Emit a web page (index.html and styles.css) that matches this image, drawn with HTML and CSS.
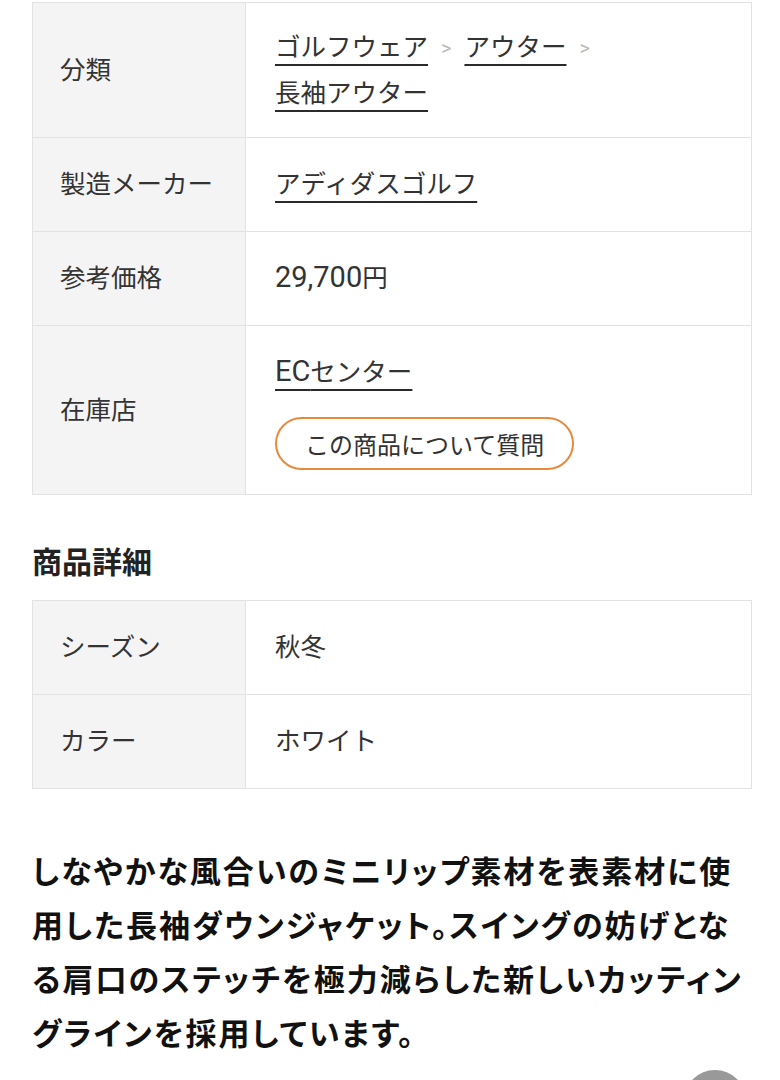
FILE: index.html
```html
<!DOCTYPE html>
<html lang="ja">
<head>
<meta charset="utf-8">
<title>商品情報</title>
<link rel="stylesheet" href="styles.css">
</head>
<body>
<main class="page">
  <table class="spec">
    <tr>
      <th>分類</th>
      <td class="crumbs">
        <a href="#">ゴルフウェア</a><span class="sep">&gt;</span><a href="#">アウター</a><span class="sep">&gt;</span><br><a href="#">長袖アウター</a>
      </td>
    </tr>
    <tr>
      <th>製造メーカー</th>
      <td><a href="#">アディダスゴルフ</a></td>
    </tr>
    <tr>
      <th>参考価格</th>
      <td><span class="latin">29,700</span>円</td>
    </tr>
    <tr>
      <th>在庫店</th>
      <td class="shop">
        <a href="#"><span class="latin">EC</span>センター</a>
        <div class="ask"><button type="button" class="ask-btn">この商品について質問</button></div>
      </td>
    </tr>
  </table>

  <h2 class="heading">商品詳細</h2>

  <table class="spec">
    <tr>
      <th>シーズン</th>
      <td>秋冬</td>
    </tr>
    <tr>
      <th>カラー</th>
      <td>ホワイト</td>
    </tr>
  </table>

  <p class="desc">しなやかな風合いのミニリップ素材を表素材に使用した長袖ダウンジャケット。スイングの妨げとなる肩口のステッチを極力減らした新しいカッティングラインを採用しています。</p>
</main>
<div class="pagetop"></div>
</body>
</html>
```

FILE: styles.css
```css
html, body {
  margin: 0;
  padding: 0;
  background: #fff;
}
body {
  font-family: Roboto, "Noto Sans CJK JP", sans-serif;
  color: #333;
}
.page {
  padding: 2px 28px 0 32px;
}
.spec {
  width: 720px;
  border-collapse: collapse;
  font-size: 25.5px;
  line-height: 45px;
}
.spec th,
.spec td {
  border: 1px solid #e2e2e2;
  padding: 24px 0 24px 28px;
  text-align: left;
  vertical-align: middle;
}
.spec th {
  width: 185px;
  background: #f4f4f4;
  font-weight: normal;
  padding-left: 27px;
}
.spec td {
  padding-left: 29px;
}
.spec td.crumbs {
  padding-top: 22px;
  padding-bottom: 21px;
}
.latin {
  font-size: 29px;
  line-height: 1;
}
.spec a {
  color: #333;
  text-decoration: underline;
  text-decoration-color: #2a2a2a;
  text-decoration-thickness: 2px;
  text-underline-offset: 8px;
}
.sep {
  color: #bbb;
  font-size: 20px;
  margin: 0 13px;
  vertical-align: 1px;
}
.ask {
  margin-top: 22px;
  line-height: 1;
}
.ask-btn {
  font-family: inherit;
  font-size: 24px;
  color: #333;
  background: #fff;
  border: 2px solid #e8893c;
  border-radius: 27px;
  height: 53px;
  padding: 0 28px;
}
.heading {
  font-size: 30px;
  font-weight: bold;
  color: #222;
  margin: 48px 0 17px;
  line-height: 40px;
}
.desc {
  margin: 57px 0 0;
  font-size: 31px;
  font-weight: bold;
  font-feature-settings: "palt";
  letter-spacing: 2px;
  line-height: 54px;
  color: #111;
}
.pagetop {
  position: fixed;
  right: 34px;
  bottom: -52px;
  width: 62px;
  height: 62px;
  border-radius: 50%;
  background: #999;
}
```
